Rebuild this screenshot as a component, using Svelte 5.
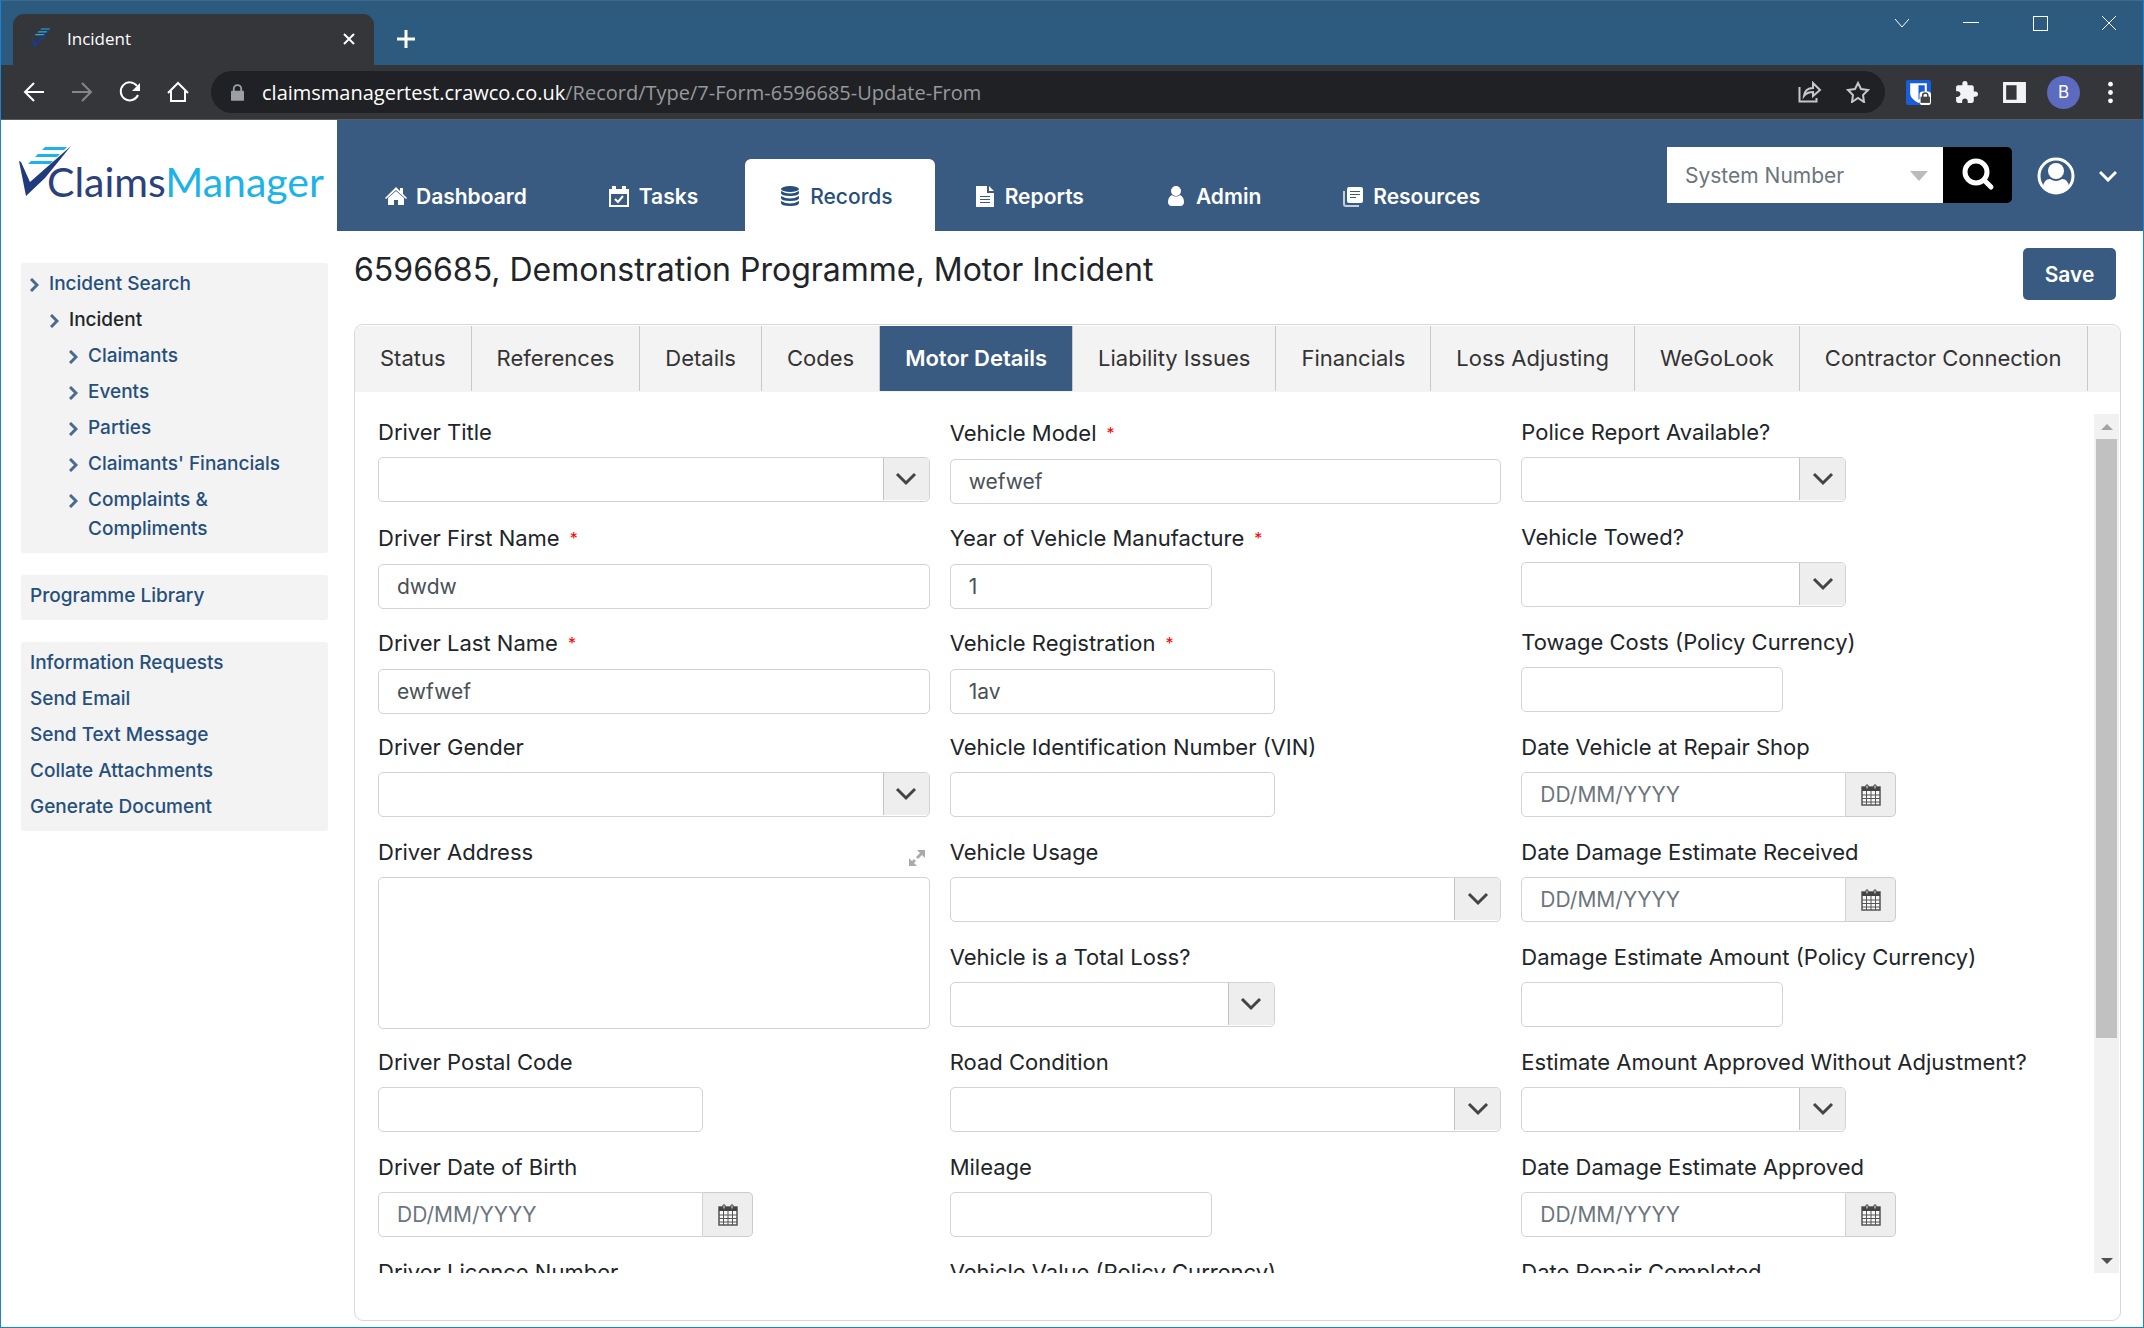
<script lang="ts">
	type Field = {
		id: string;
		label: string;
		kind: 'text' | 'select' | 'date' | 'area';
		size?: 'short' | 'medium' | 'full';
		value?: string;
		required?: boolean;
	};

	const navItems = [
		{ name: 'Dashboard', icon: 'house' },
		{ name: 'Tasks', icon: 'tasks' },
		{ name: 'Records', icon: 'database' },
		{ name: 'Reports', icon: 'file' },
		{ name: 'Admin', icon: 'person' },
		{ name: 'Resources', icon: 'library' }
	];

	const tree = [
		{ name: 'Incident Search', level: 1 },
		{ name: 'Incident', level: 2, current: true },
		{ name: 'Claimants', level: 3 },
		{ name: 'Events', level: 3 },
		{ name: 'Parties', level: 3 },
		{ name: "Claimants' Financials", level: 3 },
		{ name: 'Complaints & Compliments', level: 3 }
	];

	const linkGroups = [
		['Programme Library'],
		[
			'Information Requests',
			'Send Email',
			'Send Text Message',
			'Collate Attachments',
			'Generate Document'
		]
	];

	const tabs = [
		'Status',
		'References',
		'Details',
		'Codes',
		'Motor Details',
		'Liability Issues',
		'Financials',
		'Loss Adjusting',
		'WeGoLook',
		'Contractor Connection'
	];

	const columns: Field[][] = [
		[
			{ id: 'title', label: 'Driver Title', kind: 'select' },
			{ id: 'first', label: 'Driver First Name', kind: 'text', value: 'dwdw', required: true },
			{ id: 'last', label: 'Driver Last Name', kind: 'text', value: 'ewfwef', required: true },
			{ id: 'gender', label: 'Driver Gender', kind: 'select' },
			{ id: 'address', label: 'Driver Address', kind: 'area' },
			{ id: 'postal', label: 'Driver Postal Code', kind: 'text', size: 'medium' },
			{ id: 'dob', label: 'Driver Date of Birth', kind: 'date' },
			{ id: 'licence', label: 'Driver Licence Number', kind: 'text' }
		],
		[
			{ id: 'model', label: 'Vehicle Model', kind: 'text', value: 'wefwef', required: true },
			{ id: 'year', label: 'Year of Vehicle Manufacture', kind: 'text', size: 'short', value: '1', required: true },
			{ id: 'reg', label: 'Vehicle Registration', kind: 'text', size: 'medium', value: '1av', required: true },
			{ id: 'vin', label: 'Vehicle Identification Number (VIN)', kind: 'text', size: 'medium' },
			{ id: 'usage', label: 'Vehicle Usage', kind: 'select' },
			{ id: 'loss', label: 'Vehicle is a Total Loss?', kind: 'select', size: 'medium' },
			{ id: 'road', label: 'Road Condition', kind: 'select' },
			{ id: 'mileage', label: 'Mileage', kind: 'text', size: 'short' },
			{ id: 'value', label: 'Vehicle Value (Policy Currency)', kind: 'text', size: 'short' }
		],
		[
			{ id: 'police', label: 'Police Report Available?', kind: 'select', size: 'medium' },
			{ id: 'towed', label: 'Vehicle Towed?', kind: 'select', size: 'medium' },
			{ id: 'towage', label: 'Towage Costs (Policy Currency)', kind: 'text', size: 'short' },
			{ id: 'repair', label: 'Date Vehicle at Repair Shop', kind: 'date' },
			{ id: 'received', label: 'Date Damage Estimate Received', kind: 'date' },
			{ id: 'amount', label: 'Damage Estimate Amount (Policy Currency)', kind: 'text', size: 'short' },
			{ id: 'approved', label: 'Estimate Amount Approved Without Adjustment?', kind: 'select', size: 'medium' },
			{ id: 'approvedDate', label: 'Date Damage Estimate Approved', kind: 'date' },
			{ id: 'completed', label: 'Date Repair Completed', kind: 'date' }
		]
	];

	let activeNav = $state('Records');
	let activeTab = $state('Motor Details');
</script>

{#snippet mark()}
	<path d="M26 1h22l-3 3H23zM19 8h22l-3 3H16zM12 15h22l-3 3H9z" fill="#1cb2ea" />
	<path d="M0 15l2 1 9 20L52 0 26 32 7 50z" fill="#1f3a7d" />
{/snippet}

{#snippet navIcon(name: string)}
	<svg class="nav-icon" viewBox="0 0 22 22" aria-hidden="true">
		{#if name === 'house'}
			<path d="M11 2l4 4V3h3v6l4 4-1 1-10-9-10 9-1-1z" fill="currentColor" />
			<path d="M3 13l8-7 8 7v7h-6v-5H9v5H3z" fill="currentColor" />
		{:else if name === 'tasks'}
			<path d="M2 5h18v16H2z" fill="none" stroke="currentColor" stroke-width="2" />
			<path d="M1 4h20v5H1zM4 1h4v5H4zM14 1h4v5h-4z" fill="currentColor" />
			<path d="M7 14l3 3 5-6" fill="none" stroke="currentColor" stroke-width="2" />
		{:else if name === 'database'}
			<ellipse cx="11" cy="4" rx="9" ry="3" fill="currentColor" />
			<path d="M2 6q9 5 18 0v2q0 3-9 3t-9-3zM2 11q9 5 18 0v2q0 3-9 3t-9-3zM2 16q9 5 18 0v2q0 3-9 3t-9-3z" fill="currentColor" />
		{:else if name === 'file'}
			<path d="M2 1h11v7h7v14H2zM15 1l5 5h-5zM6 11v1h10v-1zM6 14v1h10v-1zM6 17v1h10v-1z" fill="currentColor" fill-rule="evenodd" />
		{:else if name === 'person'}
			<ellipse cx="11" cy="6" rx="5" ry="5" fill="currentColor" />
			<path d="M7 10q4 3 8 0 4 2 4 7 0 3-3 4H6q-3-1-3-4 0-5 4-7z" fill="currentColor" />
		{:else}
			<path d="M6 2h13a2 2 0 0 1 2 2v12a2 2 0 0 1-2 2H7a2 2 0 0 1-2-2V4zM8 6v1h10V6zM8 9v1h10V9zM8 12v1h6v-1z" fill="currentColor" fill-rule="evenodd" />
			<path d="M2 6v13a2 2 0 0 0 2 2h13" fill="none" stroke="currentColor" stroke-width="2" opacity=".7" />
		{/if}
	</svg>
{/snippet}

{#snippet calendar()}
	<svg class="calendar" viewBox="0 0 20 22" aria-hidden="true">
		<path d="M1 3h18v18H1z" fill="#f8f8f8" stroke="#555" stroke-width="1.5" />
		<path d="M1 3h18v4H1z" fill="#444" />
		<path d="M1 11h18M1 14.500h18M1 18h18M5.500 7v14M10 7v14M14.500 7v14" stroke="#555" stroke-width="1" />
		<path d="M5 1h2v4H5zM13 1h2v4h-2z" fill="#eee" stroke="#444" />
	</svg>
{/snippet}

<div class="window">
	<div class="titlebar">
		<div class="browser-tab">
			<svg class="favicon" viewBox="0 0 52 52" aria-hidden="true">{@render mark()}</svg>
			<span>Incident</span>
			<button class="plain" type="button" aria-label="Close tab">
				<svg width="14" height="14" viewBox="0 0 14 14"><path d="M2 2l10 10M12 2L2 12" stroke="#fff" stroke-width="2" /></svg>
			</button>
		</div>
		<button class="plain new-tab" type="button" aria-label="New tab">
			<svg width="18" height="18" viewBox="0 0 18 18"><path d="M9 0v18M0 9h18" stroke="#fff" stroke-width="3" /></svg>
		</button>
		<div class="window-buttons">
			<button class="plain" type="button" aria-label="Search tabs">
				<svg viewBox="0 0 16 16"><path d="M1 4l7 8 7-8" /></svg>
			</button>
			<button class="plain" type="button" aria-label="Minimise">
				<svg viewBox="0 0 16 16" shape-rendering="crispEdges"><path d="M0 7h16" /></svg>
			</button>
			<button class="plain" type="button" aria-label="Maximise">
				<svg viewBox="0 0 16 16" shape-rendering="crispEdges"><path d="M1 1h14v14H1z" /></svg>
			</button>
			<button class="plain" type="button" aria-label="Close">
				<svg viewBox="0 0 16 16"><path d="M1 1l14 14M15 1L1 15" /></svg>
			</button>
		</div>
	</div>

	<div class="toolbar">
		<div class="browser-nav">
			<button class="plain" type="button" aria-label="Back">
				<svg viewBox="0 0 22 22"><path d="M21 11H2M11 2l-9 9 9 9" /></svg>
			</button>
			<button class="plain dim" type="button" aria-label="Forward">
				<svg viewBox="0 0 22 22"><path d="M1 11h19M11 2l9 9-9 9" /></svg>
			</button>
			<button class="plain" type="button" aria-label="Reload">
				<svg viewBox="0 0 22 22"><path d="M19 14a9 9 0 1 1-1-9" /><path d="M21 2v8h-8z" fill="#fff" stroke="none" /></svg>
			</button>
			<button class="plain" type="button" aria-label="Home">
				<svg viewBox="0 0 22 22"><path d="M1 12L11 2l10 10M4 10v10h14V10" /></svg>
			</button>
		</div>
		<div class="omnibox">
			<svg class="lock" viewBox="0 0 14 18" aria-hidden="true">
				<path d="M1 7h12a1 1 0 0 1 1 1v9a1 1 0 0 1-1 1H1a1 1 0 0 1-1-1V8a1 1 0 0 1 1-1z" fill="#9aa0a6" />
				<path d="M3 8V5a4 4 0 0 1 8 0v3" fill="none" stroke="#9aa0a6" stroke-width="2" />
			</svg>
			<span class="url"><b>claimsmanagertest.crawco.co.uk</b>/Record/Type/7-Form-6596685-Update-From</span>
			<svg class="box-icon" viewBox="0 0 24 22" aria-hidden="true">
				<path d="M1.500 6v14.500h17V17M6 15q1-8 9-8V2l7 7-7 6v-4q-6 0-9 4z" />
			</svg>
			<svg class="box-icon" viewBox="0 0 24 22" aria-hidden="true">
				<path d="M12 2l3 6 7 1-5 5 1 7-6-4-6 4 1-7-5-5 7-1z" />
			</svg>
		</div>
		<div class="extensions">
			<svg viewBox="0 0 24 24" aria-hidden="true">
				<rect width="24" height="24" rx="2" fill="#175ddc" />
				<path d="M4 3h16v10q0 5-8 9-8-4-8-9z" fill="#fff" />
				<path d="M12 5h6v8q0 3-6 6z" fill="#175ddc" />
				<rect x="13" y="11" width="11" height="13" rx="3" fill="#fff" />
				<path d="M14 16h9v6h-9z" fill="#444" />
				<path d="M16 17v-2a2 2 0 0 1 5 0v2" fill="none" stroke="#444" stroke-width="1.500" />
			</svg>
			<svg viewBox="0 0 24 24" aria-hidden="true">
				<path d="M20.5 11H19V7c0-1.1-.9-2-2-2h-4V3.5a2.5 2.5 0 0 0-5 0V5H4c-1.1 0-2 .9-2 2v3.8h1.5c1.5 0 2.7 1.2 2.7 2.7s-1.2 2.7-2.7 2.7H2V20c0 1.1.9 2 2 2h3.800v-1.500c0-1.500 1.200-2.700 2.700-2.700s2.700 1.200 2.700 2.700V22H17c1.100 0 2-.9 2-2v-4h1.500a2.500 2.500 0 0 0 0-5z" fill="#f1f3f4" />
			</svg>
			<svg viewBox="0 0 24 24" aria-hidden="true">
				<path d="M1 2h22v20H1zM4 5v14h10V5z" fill="#f1f3f4" fill-rule="evenodd" />
			</svg>
			<span class="profile">B</span>
			<svg viewBox="0 0 24 24" aria-hidden="true">
				<circle cx="12" cy="4" r="2.300" fill="#fff" /><circle cx="12" cy="12" r="2.300" fill="#fff" /><circle cx="12" cy="20" r="2.300" fill="#fff" />
			</svg>
		</div>
	</div>

	<header>
		<a class="logo" href="#home" aria-label="Claims Manager">
			<svg class="logo-mark" viewBox="0 0 52 52" aria-hidden="true">{@render mark()}</svg>
			<span class="logo-text">Claims<em>Manager</em></span>
		</a>
		<nav>
			{#each navItems as item}
				<a
					href="#{item.name}"
					class:active={item.name === activeNav}
					onclick={() => (activeNav = item.name)}
				>
					{@render navIcon(item.icon)}
					{item.name}
				</a>
			{/each}
		</nav>
		<div class="search">
			<div class="search-select">
				<select aria-label="Search by">
					<option>System Number</option>
				</select>
				<span class="triangle"></span>
			</div>
			<button type="button" aria-label="Search">
				<svg width="34" height="34" viewBox="0 0 34 34"><circle cx="15" cy="14" r="11" fill="none" stroke="#fff" stroke-width="5" /><path d="M23 22l7 7" stroke="#fff" stroke-width="5" stroke-linecap="round" /></svg>
			</button>
		</div>
		<button class="plain account" type="button" aria-label="Account">
			<svg width="38" height="38" viewBox="0 0 38 38">
				<circle cx="19" cy="19" r="17" fill="none" stroke="#fff" stroke-width="3" />
				<ellipse cx="19" cy="14" rx="8" ry="8" fill="#fff" />
				<path d="M6 30q1-8 7-8 6 4 12 0 6 0 7 8-5 6-13 6T6 30z" fill="#fff" />
			</svg>
			<svg width="18" height="12" viewBox="0 0 18 12"><path d="M1 2l8 8 8-8" fill="none" stroke="#fff" stroke-width="3" /></svg>
		</button>
	</header>

	<div class="page">
		<aside>
			<ul>
				{#each tree as node}
					<li class="level-{node.level}">
						<svg class="chevron" viewBox="0 0 9 14" aria-hidden="true"><path d="M1 1l6 6-6 6" /></svg>
						<a href="#{node.name}" class:current={node.current}>{node.name}</a>
					</li>
				{/each}
			</ul>
			{#each linkGroups as group}
				<ul>
					{#each group as link}
						<li><a href="#{link}">{link}</a></li>
					{/each}
				</ul>
			{/each}
		</aside>

		<main>
			<div class="heading">
				<h1>6596685, Demonstration Programme, Motor Incident</h1>
				<button class="save" type="button">Save</button>
			</div>

			<section class="panel">
				<div class="tabs" role="tablist">
					{#each tabs as tab}
						<button
							type="button"
							role="tab"
							aria-selected={tab === activeTab}
							class:active={tab === activeTab}
							onclick={() => (activeTab = tab)}
						>{tab}</button>
					{/each}
				</div>

				<div class="scroller">
					<form>
						{#each columns as fields}
							<div class="column">
								{#each fields as field}
									<div class="field">
										<div class="label-row" class:required={field.required}>
											<label for={field.id}>{field.label}</label>
											{#if field.required}<span class="star">*</span>{/if}
											{#if field.kind === 'area'}
												<button class="plain expand" type="button" aria-label="Expand">
													<svg width="16" height="16" viewBox="0 0 16 16"><path d="M8 0h8v8l-3-3-4 4-2-2 4-4zM0 8l3 3 2-2 2 2-2 2 3 3H0z" fill="#aaa" /></svg>
												</button>
											{/if}
										</div>
										{#if field.kind === 'select'}
											<div class="select {field.size ?? 'full'}">
												<select id={field.id}><option></option></select>
												<span class="arrow">
													<svg width="22" height="14" viewBox="0 0 22 14"><path d="M2 2l9 9 9-9" fill="none" stroke="#444" stroke-width="3" /></svg>
												</span>
											</div>
										{:else if field.kind === 'date'}
											<div class="date">
												<input id={field.id} type="text" placeholder="DD/MM/YYYY" />
												<button type="button" aria-label="Choose date">{@render calendar()}</button>
											</div>
										{:else if field.kind === 'area'}
											<textarea id={field.id}></textarea>
										{:else}
											<input class={field.size ?? 'full'} id={field.id} type="text" value={field.value ?? ''} />
										{/if}
									</div>
								{/each}
							</div>
						{/each}
					</form>
					<div class="scrollbar" aria-hidden="true">
						<span class="up"></span>
						<div class="track"><div class="thumb"></div></div>
						<span class="down"></span>
					</div>
				</div>
			</section>
		</main>
	</div>
</div>

<style>
	:global(body) {
		margin: 0;
	}

	* {
		box-sizing: border-box;
	}

	.window {
		height: 100vh;
		display: flex;
		flex-direction: column;
		border: 1px solid #1883d7;
		border-top-color: #40698a;
		background: #fff;
		color: #212529;
		font-family: Inter, sans-serif;
		font-size: 21px;
		overflow: hidden;
	}

	button,
	input,
	select,
	textarea {
		font: inherit;
		color: inherit;
		margin: 0;
	}

	a {
		text-decoration: none;
	}

	.plain {
		display: flex;
		align-items: center;
		justify-content: center;
		padding: 0;
		border: none;
		background: none;
	}

	/* browser frame */
	.titlebar {
		display: flex;
		align-items: flex-end;
		height: 64px;
		flex: none;
		padding-left: 12px;
		background: #2d5b7f;
	}

	.browser-tab {
		display: flex;
		align-items: center;
		gap: 15px;
		width: 361px;
		height: 51px;
		padding: 0 18px 2px;
		border-radius: 11px 11px 0 0;
		background: #35363a;
		color: #fff;
		font-family: 'Open Sans', sans-serif;
		font-size: 17px;
	}

	.browser-tab span {
		flex: 1;
	}

	.favicon {
		width: 21px;
		height: 21px;
	}

	.new-tab {
		width: 64px;
		height: 51px;
		padding-bottom: 2px;
	}

	.window-buttons {
		display: flex;
		align-self: flex-start;
		margin-left: auto;
	}

	.window-buttons button {
		width: 69px;
		height: 44px;
	}

	.window-buttons svg {
		width: 16px;
		height: 16px;
		fill: none;
		stroke: #fff;
		stroke-width: 1;
	}

	.toolbar {
		display: flex;
		align-items: center;
		height: 55px;
		flex: none;
		padding: 0 20px 0 22px;
		border-bottom: 1px solid #5b5c5f;
		background: #35363a;
	}

	.browser-nav {
		display: flex;
		gap: 26px;
		margin-right: 22px;
	}

	.browser-nav svg {
		width: 22px;
		height: 22px;
		fill: none;
		stroke: #fff;
		stroke-width: 2;
	}

	.browser-nav .dim svg {
		stroke: #85868a;
	}

	.omnibox {
		flex: 1;
		display: flex;
		align-items: center;
		gap: 24px;
		height: 42px;
		padding: 0 15px 0 20px;
		border-radius: 21px;
		background: #202124;
	}

	.lock {
		width: 13px;
		height: 17px;
		margin-right: -6px;
	}

	.url {
		flex: 1;
		color: #96999d;
		font-family: 'Open Sans', sans-serif;
		font-size: 20px;
	}

	.url b {
		color: #fff;
		font-weight: 400;
	}

	.box-icon {
		width: 24px;
		height: 22px;
		fill: none;
		stroke: #c4c7cb;
		stroke-width: 2;
	}

	.extensions {
		display: flex;
		align-items: center;
		gap: 23px;
		margin-left: 21px;
	}

	.extensions svg {
		width: 25px;
		height: 25px;
	}

	.profile {
		width: 33px;
		height: 33px;
		margin: 0 -5px 0 -3px;
		border-radius: 50%;
		background: #5c6bc0;
		color: #fff;
		font-size: 17px;
		line-height: 33px;
		text-align: center;
	}

	/* site header */
	header {
		display: flex;
		height: 111px;
		flex: none;
		background: #395b81;
	}

	.logo {
		display: flex;
		align-items: flex-start;
		width: 336px;
		padding: 26px 0 0 18px;
		background: #fff;
	}

	.logo-mark {
		width: 52px;
		height: 52px;
		flex: none;
		margin-right: -24px;
	}

	.logo-text {
		margin-top: 8px;
		color: #2a417c;
		font-family: Lato, sans-serif;
		font-size: 41px;
		line-height: 56px;
	}

	.logo-text em {
		color: #1cb2ea;
		font-style: normal;
	}

	nav {
		display: flex;
		align-items: flex-end;
		gap: 5px;
		flex: 1;
		padding-left: 14px;
	}

	nav a {
		display: flex;
		align-items: center;
		gap: 9px;
		height: 72px;
		padding: 2px 42px 0 34px;
		border-radius: 6px 6px 0 0;
		color: #fff;
		font-weight: 600;
	}

	nav a.active {
		background: #fff;
		color: #264f7c;
		font-weight: 500;
	}

	.nav-icon {
		width: 22px;
		height: 22px;
	}

	.search {
		display: flex;
		align-self: flex-start;
		height: 56px;
		margin-top: 27px;
	}

	.search-select {
		position: relative;
		width: 276px;
	}

	.search-select select {
		appearance: none;
		width: 100%;
		height: 100%;
		padding: 0 18px;
		border: none;
		border-radius: 0;
		background: #fff;
		color: #6c757d;
	}

	.triangle {
		position: absolute;
		top: 24px;
		right: 15px;
		border: 9px solid transparent;
		border-top: 10px solid #bbb;
		border-bottom: none;
		pointer-events: none;
	}

	.search button {
		display: flex;
		align-items: center;
		justify-content: center;
		width: 69px;
		padding: 0;
		border: none;
		border-radius: 0 5px 5px 0;
		background: #000;
	}

	.account {
		gap: 24px;
		align-self: flex-start;
		margin: 37px 26px 0 25px;
	}

	/* body */
	.page {
		display: flex;
		flex: 1;
		min-height: 0;
		padding: 0 22px 6px 20px;
	}

	aside {
		display: flex;
		flex-direction: column;
		gap: 22px;
		width: 307px;
		flex: none;
		padding-top: 32px;
		font-size: 19px;
		font-weight: 500;
	}

	aside ul {
		margin: 0;
		padding: 6px 9px 3px;
		border-radius: 3px;
		background: #f3f3f3;
		list-style: none;
	}

	aside li {
		display: flex;
		align-items: flex-start;
		gap: 10px;
		padding-bottom: 7px;
		line-height: 29px;
	}

	aside .level-2 {
		padding-left: 20px;
	}

	aside .level-3 {
		padding-left: 39px;
		padding-right: 20px;
	}

	aside a {
		color: #264f7c;
	}

	aside a.current {
		color: #212529;
	}

	.chevron {
		width: 9px;
		height: 14px;
		flex: none;
		margin-top: 9px;
		fill: none;
		stroke: #4a6a8f;
		stroke-width: 3;
	}

	main {
		display: flex;
		flex-direction: column;
		flex: 1;
		min-width: 0;
		margin-left: 26px;
	}

	.heading {
		display: flex;
		align-items: flex-start;
		justify-content: space-between;
		height: 93px;
		flex: none;
		padding: 17px 5px 0 0;
	}

	h1 {
		margin: 0;
		font-size: 32px;
		font-weight: 400;
		line-height: 44px;
	}

	.save {
		width: 93px;
		height: 52px;
		padding: 0;
		border: none;
		border-radius: 5px;
		background: #395b81;
		color: #fff;
		font-weight: 600;
	}

	.panel {
		display: flex;
		flex-direction: column;
		flex: 1;
		min-height: 0;
		padding: 1px 0 47px;
		border: 1px solid #d6d8db;
		border-radius: 9px;
	}

	.tabs {
		display: flex;
		height: 66px;
		flex: none;
		border-radius: 8px 8px 0 0;
		background: #f3f3f3;
		overflow: hidden;
	}

	.tabs button {
		height: 65px;
		padding: 0 25px 1px;
		border: none;
		border-right: 1px solid #c8c9ca;
		background: none;
		color: #333;
		font-size: 22px;
		white-space: nowrap;
	}

	.tabs button.active {
		background: #395b81;
		color: #fff;
		font-weight: 600;
	}

	.scroller {
		display: flex;
		flex: 1;
		min-height: 0;
		margin: 22px 1px 0 0;
		overflow: hidden;
	}

	form {
		display: grid;
		grid-template-columns: repeat(3, 1fr);
		gap: 20px;
		flex: 1;
		padding: 8px 21px 0 23px;
	}

	.column {
		min-width: 0;
	}

	.field {
		min-height: 105px;
		padding-bottom: 23px;
	}

	.label-row {
		display: flex;
		height: 24px;
		margin-bottom: 11px;
		font-size: 22px;
		line-height: 20px;
		white-space: nowrap;
	}

	.label-row.required {
		height: 26px;
		line-height: 22px;
	}

	.star {
		margin-left: 10px;
		color: #f00;
		font-size: 16px;
	}

	.expand {
		margin: 8px 5px 0 auto;
	}

	input,
	textarea,
	.select {
		display: block;
		height: 45px;
		padding: 0 18px;
		border: 1px solid #ced4da;
		border-radius: 5px;
		background: #fff;
		color: #495057;
	}

	input::placeholder {
		color: #6c757d;
		opacity: 1;
	}

	textarea {
		width: 100%;
		height: 152px;
		resize: none;
	}

	.full {
		width: 100%;
	}

	.medium {
		width: 325px;
	}

	.short {
		width: 262px;
	}

	.select {
		position: relative;
		padding: 0;
		overflow: hidden;
	}

	.select select {
		appearance: none;
		width: 100%;
		height: 100%;
		padding: 0 18px;
		border: none;
		background: none;
	}

	.arrow {
		position: absolute;
		inset: 0 0 1px auto;
		display: flex;
		align-items: center;
		justify-content: center;
		width: 46px;
		border-left: 1px solid #c4c4c4;
		background: #eee;
		pointer-events: none;
	}

	.date {
		display: flex;
	}

	.date input {
		width: 325px;
		border-radius: 5px 0 0 5px;
	}

	.date button {
		display: flex;
		align-items: center;
		justify-content: center;
		width: 50px;
		padding: 0;
		border: 1px solid #ccc;
		border-left: none;
		border-radius: 0 5px 5px 0;
		background: #eee;
	}

	.calendar {
		width: 20px;
		height: 22px;
	}

	.scrollbar {
		display: flex;
		flex-direction: column;
		align-items: center;
		width: 25px;
		flex: none;
		background: #f1f1f1;
	}

	.up,
	.down {
		height: 25px;
		display: flex;
		align-items: center;
	}

	.up::before,
	.down::before {
		content: '';
		border: 6px solid transparent;
	}

	.up::before {
		border-top: none;
		border-bottom-color: #a3a3a3;
	}

	.down::before {
		border-bottom: none;
		border-top-color: #505050;
	}

	.track {
		flex: 1;
		width: 21px;
	}

	.thumb {
		height: 74%;
		background: #c1c1c1;
	}
</style>
